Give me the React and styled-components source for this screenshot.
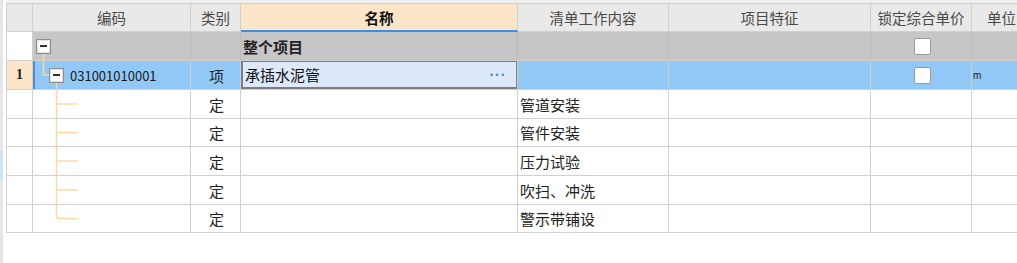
import React from "react";
import styled, { createGlobalStyle } from "styled-components";

const Global = createGlobalStyle`
  html, body { margin: 0; padding: 0; background: #fff; }
  body { font-family: "Noto Sans CJK SC", "Noto Sans", sans-serif; overflow: hidden; }
`;

const Page = styled.div`
  display: flex;
  width: 1017px;
  height: 263px;
  overflow: hidden;
  background: #fff;
`;

const Rail = styled.div`
  flex: none;
  width: 3px;
  margin-right: 3px;
  background: linear-gradient(#e6e6e6 0 150px, #cfe3f7 150px 180px, #e6e6e6 180px);
`;

const Frame = styled.div`
  flex: none;
  padding-top: 3px;
  background: linear-gradient(#f0f0f0 0 3px, #fff 3px);
`;

const Grid = styled.div`
  display: grid;
  grid-template-columns: 26px 158px 50px 277px 151px 202px 101px 60px;
  grid-template-rows: 28px 29px 29px 29px 28px 29px 29px 28px;
  border-left: 1px solid #d0d0d0;
  border-top: 1px solid #d0d0d0;
  width: max-content;
`;

const Head = styled.div`
  display: flex;
  align-items: center;
  justify-content: center;
  background: ${(p) => (p.$active ? "#fde6c8" : "#e9e9e9")};
  border-right: 1px solid #d0d0d0;
  border-bottom: ${(p) => (p.$active ? "2px solid #3d8fe2" : "1px solid #d0d0d0")};
  color: ${(p) => (p.$active ? "#111" : "#4a4a4a")};
  font-weight: ${(p) => (p.$active ? 700 : 400)};
  font-size: 14.5px;
  white-space: nowrap;
  overflow: hidden;
`;

const Cell = styled.div`
  position: relative;
  display: flex;
  align-items: center;
  justify-content: ${(p) => (p.$center ? "center" : "flex-start")};
  padding-left: ${(p) => p.$pad ?? 2}px;
  background: ${(p) =>
    p.$kind === "group" ? "#c6c6c6" : p.$kind === "sel" ? "#92c8f5" : p.$kind === "num" ? "#fde6c8" : "#fff"};
  border-right: 1px solid ${(p) => (p.$kind === "group" ? "#bdbdbd" : "#d0d0d0")};
  border-bottom: 1px solid #d0d0d0;
  color: #222;
  font-size: 15px;
  font-weight: ${(p) => (p.$bold ? 700 : 400)};
  white-space: nowrap;
  overflow: hidden;
  box-sizing: border-box;
`;

const NumText = styled.span`
  font-family: "Liberation Serif", serif;
  font-weight: 700;
  font-size: 14px;
  color: #222;
`;

const SelBar = styled.span`
  position: absolute;
  left: 0;
  top: 0;
  bottom: 0;
  width: 2px;
  background: #3d8fe2;
`;

const Code = styled.span`
  font-size: 13px;
  color: #1a1a1a;
  margin-left: 6px;
  position: relative;
`;

const Expander = styled.span`
  position: relative;
  flex: none;
  width: 13px;
  height: 13px;
  margin-left: ${(p) => p.$indent}px;
  background: #fff;
  border: 1px solid #8c8c8c;
  box-shadow: inset 0 0 0 1px #e4e4e4;
  &::after {
    content: "";
    position: absolute;
    left: 3px;
    right: 3px;
    top: 5.5px;
    height: 2px;
    background: #333;
  }
`;

const Guide = styled.svg`
  position: absolute;
  left: 0;
  top: 0;
  width: 60px;
  height: 100%;
  overflow: visible;
`;

const Editor = styled.div`
  position: absolute;
  inset: -1px -1px 0 0;
  display: flex;
  align-items: center;
  justify-content: space-between;
  padding: 0 10px 0 2px;
  background: #dde9fb;
  border: 2px solid #7d7d7d;
  font-size: 15px;
  color: #111;
`;

const Dots = styled.span`
  color: #3f8ddb;
  font-size: 12px;
  letter-spacing: 1px;
  font-weight: 700;
  font-family: "DejaVu Sans", sans-serif;
`;

const Check = styled.span`
  width: 15px;
  height: 15px;
  background: #fff;
  border: 1px solid #9a9a9a;
  border-radius: 2px;
`;

const Unit = styled.span`
  font-size: 10px;
  color: #222;
  font-family: "Liberation Sans", sans-serif;
  margin-left: -1px;
`;

const TREE = "#ffd8a0";

function TreeLines({ top, bottom, x, branch }) {
  return (
    <Guide preserveAspectRatio="none">
      {top && <line x1={x} y1="0" x2={x} y2="50%" stroke={TREE} strokeWidth="1.5" />}
      {bottom && <line x1={x} y1="50%" x2={x} y2="100%" stroke={TREE} strokeWidth="1.5" />}
      {branch && <line x1={x} y1="50%" x2={x + branch} y2="50%" stroke={TREE} strokeWidth="1.5" />}
    </Guide>
  );
}

const columns = ["", "编码", "类别", "名称", "清单工作内容", "项目特征", "锁定综合单价", "单位"];
const children = ["管道安装", "管件安装", "压力试验", "吹扫、冲洗", "警示带铺设"];

export default function App() {
  return (
    <>
      <Global />
      <Page>
        <Rail />
        <Frame>
          <Grid>
            {columns.map((c, i) => (
              <Head key={i} $active={c === "名称"}>{c}</Head>
            ))}

            <Cell />
            <Cell $kind="group" $pad={0}>
              <TreeLines x={10.5} bottom />
              <Expander $indent={3} />
            </Cell>
            <Cell $kind="group" />
            <Cell $kind="group" $bold>整个项目</Cell>
            <Cell $kind="group" />
            <Cell $kind="group" />
            <Cell $kind="group" $center><Check /></Cell>
            <Cell $kind="group" />

            <Cell $kind="num" $center $pad={0}><NumText>1</NumText></Cell>
            <Cell $kind="sel" $pad={0}>
              <SelBar />
              <TreeLines x={10.5} top branch={6} />
              <TreeLines x={23.5} bottom />
              <Expander $indent={16} />
              <Code>031001010001</Code>
            </Cell>
            <Cell $kind="sel" $center>项</Cell>
            <Cell $kind="sel">
              <Editor>
                <span>承插水泥管</span>
                <Dots>···</Dots>
              </Editor>
            </Cell>
            <Cell $kind="sel" />
            <Cell $kind="sel" />
            <Cell $kind="sel" $center><Check /></Cell>
            <Cell $kind="sel"><Unit>m</Unit></Cell>

            {children.map((name, i) => (
              <React.Fragment key={name}>
                <Cell />
                <Cell>
                  <TreeLines x={23.5} top bottom={i < children.length - 1} branch={21} />
                </Cell>
                <Cell $center>定</Cell>
                <Cell />
                <Cell>{name}</Cell>
                <Cell />
                <Cell />
                <Cell />
              </React.Fragment>
            ))}
          </Grid>
        </Frame>
      </Page>
    </>
  );
}
